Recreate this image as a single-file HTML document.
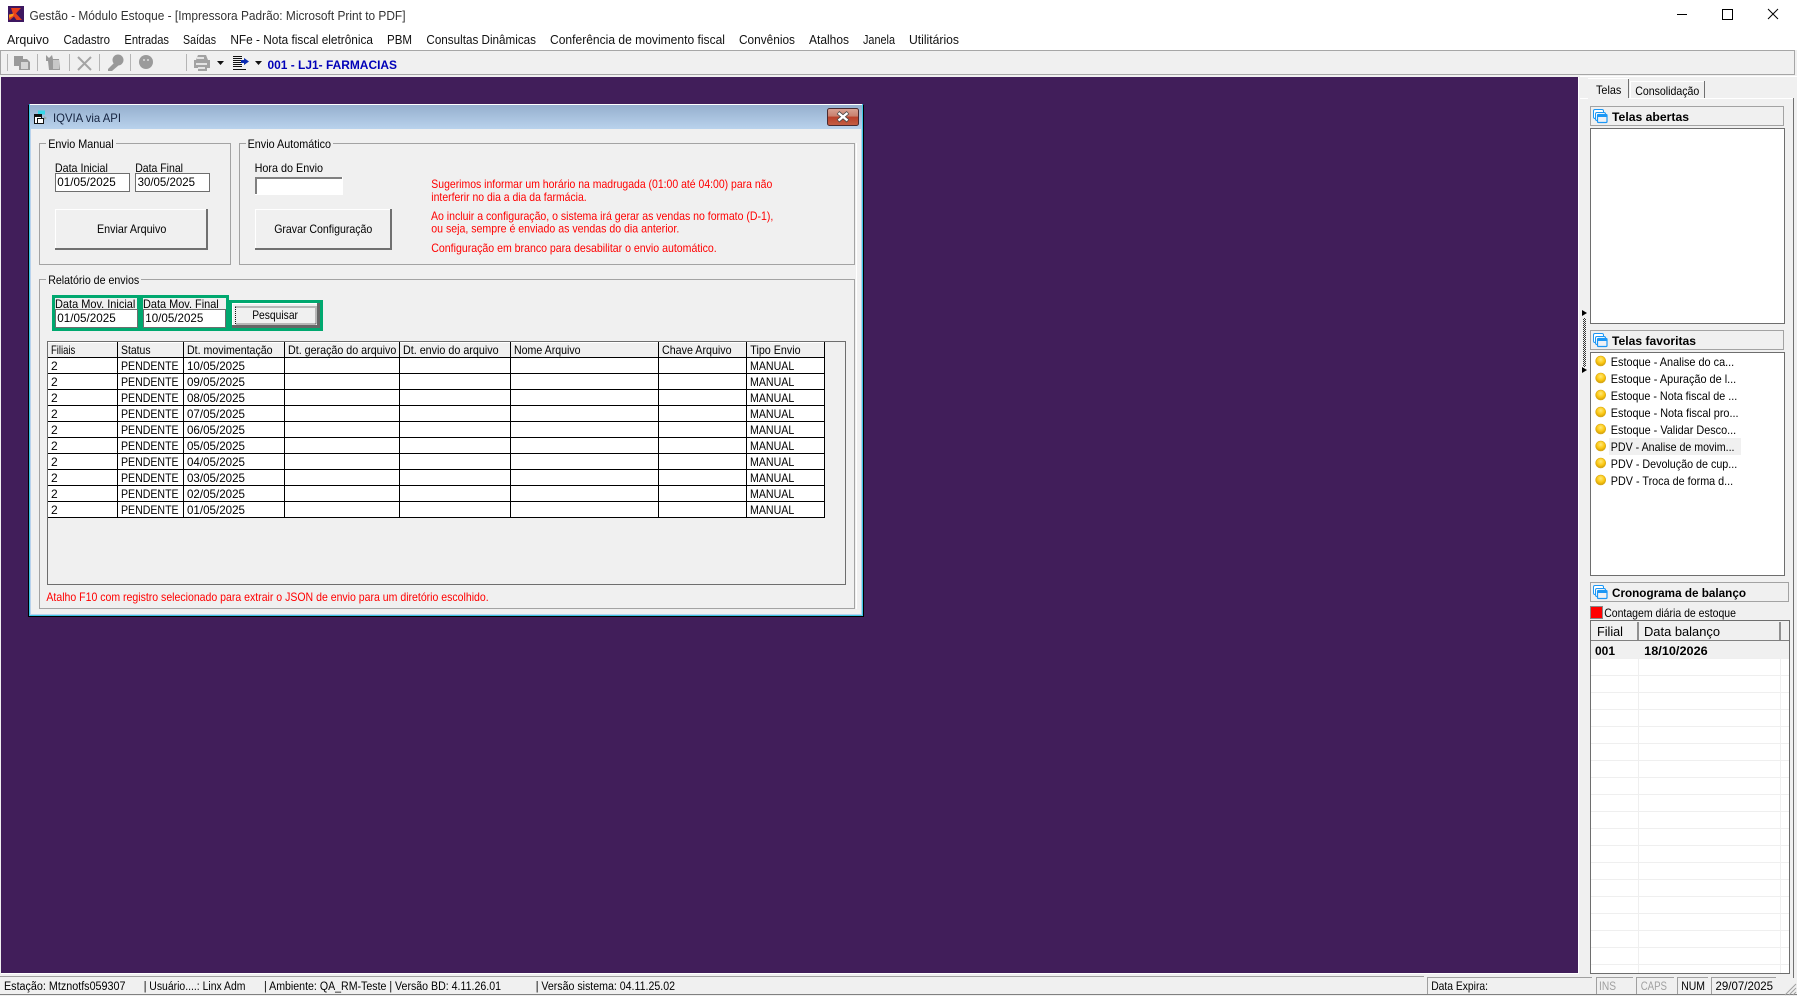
<!DOCTYPE html>
<html lang="pt"><head><meta charset="utf-8"><title>Gestão</title>
<style>
html,body{margin:0;padding:0;background:#f0f0f0;width:1797px;height:996px;overflow:hidden}
svg{display:block}
text{font-family:"Liberation Sans",Arial,sans-serif;font-size:12px;fill:#000}
.m{font-size:12.5px;fill:#111}
.r{fill:#f00}
.b{font-weight:bold}
.s{font-size:11.5px}
.c{shape-rendering:crispEdges}
</style></head><body>
<svg xmlns="http://www.w3.org/2000/svg" width="1797" height="996" viewBox="0 0 1797 996">
<defs>
<linearGradient id="tb" x1="0" y1="0" x2="0" y2="1"><stop offset="0" stop-color="#94aecd"/><stop offset="1" stop-color="#b9d2ec"/></linearGradient>
<linearGradient id="cl" x1="0" y1="0" x2="0" y2="1"><stop offset="0" stop-color="#d9a394"/><stop offset=".45" stop-color="#c8806e"/><stop offset=".5" stop-color="#b9402a"/><stop offset="1" stop-color="#c45f45"/></linearGradient>
<radialGradient id="bu" cx=".5" cy=".35" r=".65"><stop offset="0" stop-color="#ffe97a"/><stop offset=".6" stop-color="#fcc70f"/><stop offset="1" stop-color="#c99a10"/></radialGradient>
<pattern id="chk" width="2" height="2" patternUnits="userSpaceOnUse"><rect width="2" height="2" fill="#f0f0f0"/><rect width="1" height="1" fill="#333"/><rect x="1" y="1" width="1" height="1" fill="#333"/></pattern>
<g id="win"><rect x="0.5" y="0.5" width="10" height="9" rx="1.5" fill="#fff" stroke="#1c97f5"/><rect x="2.5" y="3.5" width="10" height="8" rx="1.5" fill="#fff" stroke="#1c97f5"/><rect x="4.5" y="5.5" width="9.5" height="8" rx="1" fill="#eef1f6" stroke="#1c97f5" stroke-width="1.2"/><rect x="5" y="6" width="9" height="2" fill="#1c97f5"/></g>
</defs>

<!-- window top -->
<rect class="c" x="0" y="0" width="1797" height="50" fill="#fff"/>
<rect x="8" y="6" width="16" height="16" fill="#3d1760"/>
<path d="M11 8L21 8L16 13.5L22 20L16.5 20L14 16.5L10 20L8.5 19L13 14L11 8Z" fill="#e8401c"/>
<path d="M9 14.5L14 13.5L13 16L9 18Z" fill="#f79a1e"/>
<text x="29.5" y="20" class="m" textLength="376" lengthAdjust="spacingAndGlyphs" style="fill:#333">Gestão  - Módulo Estoque - [Impressora Padrão: Microsoft Print to PDF]</text>
<rect class="c" x="1677" y="14" width="10" height="1" fill="#000"/>
<rect class="c" x="1722.5" y="9.5" width="10" height="10" fill="none" stroke="#000"/>
<path d="M1768 9L1778 19M1778 9L1768 19" stroke="#000" stroke-width="1" fill="none"/>

<!-- menu -->
<text class="m" x="7" y="44" textLength="42" lengthAdjust="spacingAndGlyphs">Arquivo</text>
<text class="m" x="63.5" y="44" textLength="46.5" lengthAdjust="spacingAndGlyphs">Cadastro</text>
<text class="m" x="124.4" y="44" textLength="44.6" lengthAdjust="spacingAndGlyphs">Entradas</text>
<text class="m" x="183" y="44" textLength="33" lengthAdjust="spacingAndGlyphs">Saídas</text>
<text class="m" x="230.4" y="44" textLength="142.6" lengthAdjust="spacingAndGlyphs">NFe - Nota fiscal eletrônica</text>
<text class="m" x="387" y="44" textLength="25" lengthAdjust="spacingAndGlyphs">PBM</text>
<text class="m" x="426.4" y="44" textLength="109.6" lengthAdjust="spacingAndGlyphs">Consultas Dinâmicas</text>
<text class="m" x="550" y="44" textLength="175" lengthAdjust="spacingAndGlyphs">Conferência de movimento fiscal</text>
<text class="m" x="739" y="44" textLength="56" lengthAdjust="spacingAndGlyphs">Convênios</text>
<text class="m" x="809" y="44" textLength="40" lengthAdjust="spacingAndGlyphs">Atalhos</text>
<text class="m" x="863" y="44" textLength="32" lengthAdjust="spacingAndGlyphs">Janela</text>
<text class="m" x="909" y="44" textLength="50" lengthAdjust="spacingAndGlyphs">Utilitários</text>

<!-- toolbar -->
<rect class="c" x="0.5" y="50.5" width="1794" height="24" fill="#f0f0f0" stroke="#a6a6a6"/>
<g class="c" fill="#b5b5b5">
<rect x="7" y="54" width="1" height="17"/><rect x="37" y="54" width="1" height="17"/><rect x="69" y="54" width="1" height="17"/><rect x="99" y="54" width="1" height="17"/><rect x="130" y="54" width="1" height="17"/><rect x="186" y="54" width="1" height="17"/>
</g>
<!-- copy -->
<path d="M14 56h9v3h4l3 3v8H19v-4h-5z" fill="#9a9a9a"/><rect x="21" y="62" width="7" height="7" fill="#d6d6d6"/>
<!-- paste -->
<path d="M46 55l3 3 3-3 1 4h6l1 11H49l-1-9h-2z" fill="#9a9a9a"/><rect x="53" y="60" width="6" height="9" fill="#c8c8c8"/>
<!-- X -->
<path d="M78 57L91 70M91 57L78 70" stroke="#a5a5a5" stroke-width="2" fill="none"/>
<!-- key -->
<circle cx="118" cy="60" r="5.5" fill="#999"/><path d="M115 62L108 69v2h4l7-6z" fill="#999"/>
<!-- smile -->
<circle cx="146" cy="62" r="7" fill="#9b9b9b"/><circle cx="144" cy="60" r="1" fill="#ddd"/><circle cx="148" cy="60" r="1" fill="#ddd"/>
<!-- printer -->
<path d="M198 55h8l2 5h2v8h-3v3h-9v-3h-4v-8h2z" fill="#a2a2a2"/><rect x="197" y="57" width="7" height="2" fill="#e4e4e4"/><rect x="196" y="63" width="11" height="2" fill="#e4e4e4"/><rect x="198" y="67" width="7" height="2" fill="#e4e4e4"/>
<path d="M217 61h7l-3.500 4z" fill="#111"/>
<!-- list -->
<g class="c" fill="#111"><rect x="233" y="56" width="9" height="1"/><rect x="233" y="58" width="9" height="1"/><rect x="233" y="60" width="9" height="1"/><rect x="233" y="62" width="9" height="1"/><rect x="233" y="64" width="9" height="1"/><rect x="233" y="66" width="9" height="1"/><rect x="233" y="69" width="13" height="1"/></g>
<path d="M241 60h3v-2l5 3.500-5 3.500v-2h-3z" fill="#0a2bb0"/>
<path d="M255 61h7l-3.500 4z" fill="#111"/>
<text x="267.500" y="69" class="b" textLength="129.500" lengthAdjust="spacingAndGlyphs" style="fill:#0000b8">001 - LJ1- FARMACIAS</text>

<!-- workspace -->
<rect class="c" x="1" y="77" width="1577" height="896" fill="#411e5a"/>
<rect class="c" x="1578" y="77" width="1" height="897" fill="#fff"/>
<rect class="c" x="1" y="973" width="1578" height="1" fill="#fff"/>

<!-- dialog -->
<rect class="c" x="28" y="105" width="836" height="512" fill="#000"/>
<rect class="c" x="29" y="104" width="834" height="512" fill="#3fc6e6"/>
<rect x="30" y="104" width="832" height="25" fill="url(#tb)"/>
<rect class="c" x="30" y="104" width="832" height="1" fill="#fff"/>
<rect class="c" x="30" y="129" width="832" height="486" fill="#b9d2ec"/>
<rect class="c" x="31" y="129" width="830" height="485" fill="#f0f0f0"/>
<rect class="c" x="29" y="105" width="1" height="511" fill="#3fc6e6"/>
<rect x="827.500" y="108.500" width="31" height="17" rx="2" fill="url(#cl)" stroke="#4a2b30"/>
<path d="M838 112.500L848 121M848 112.500L838 121" stroke="#4a4a4a" stroke-width="4" fill="none"/>
<path d="M838.500 113L847.500 120.500M847.500 113L838.500 120.500" stroke="#fff" stroke-width="2.400" fill="none"/>
<!-- dlg icon -->
<rect x="38" y="110.500" width="7" height="4" fill="#38d6e8"/>
<rect x="34.500" y="114.500" width="7" height="9" fill="#fff" stroke="#111"/><rect x="35" y="115" width="6" height="2" fill="#111"/><rect x="37.500" y="118.500" width="6" height="5" fill="#fff" stroke="#111"/>
<path d="M44 116l3 2-3 2z" fill="#9aa"/>
<text x="53" y="122" textLength="68" lengthAdjust="spacingAndGlyphs" style="fill:#15233f">IQVIA via API</text>

<!-- groups -->
<g class="c" fill="none">
<rect x="39.500" y="143.500" width="191" height="121" stroke="#a3a3a3"/>
<rect x="239.500" y="143.500" width="615" height="121" stroke="#a3a3a3"/>
<rect x="39.500" y="279.500" width="815" height="329" stroke="#a3a3a3"/>
<rect x="856" y="143" width="1" height="466" fill="#fff" stroke="none"/>
</g>
<g class="c" fill="#f0f0f0"><rect x="46" y="140" width="70" height="8"/><rect x="246" y="140" width="87" height="8"/><rect x="46" y="276" width="95" height="8"/></g>
<text x="48.200" y="148" textLength="65.500" lengthAdjust="spacingAndGlyphs">Envio Manual</text>
<text x="247.600" y="148" textLength="83.400" lengthAdjust="spacingAndGlyphs">Envio Automático</text>
<text x="48.200" y="284" textLength="91" lengthAdjust="spacingAndGlyphs">Relatório de envios</text>

<text x="54.900" y="172" textLength="53" lengthAdjust="spacingAndGlyphs">Data Inicial</text>
<text x="135.200" y="172" textLength="47.800" lengthAdjust="spacingAndGlyphs">Data Final</text>
<text x="254.600" y="172" textLength="68.400" lengthAdjust="spacingAndGlyphs">Hora do Envio</text>

<g class="c">
<rect x="55.500" y="173.500" width="74" height="18" fill="#fff" stroke="#6e6e6e"/>
<rect x="135.500" y="173.500" width="74" height="18" fill="#fff" stroke="#6e6e6e"/>
<rect x="255" y="177" width="88" height="18" fill="#fff"/>
<rect x="255" y="177" width="87" height="2" fill="#808080"/><rect x="255" y="177" width="2" height="17" fill="#808080"/>
<rect x="257" y="179" width="85" height="15" fill="#fff"/>
</g>
<text x="57.300" y="186" textLength="58.400" lengthAdjust="spacingAndGlyphs">01/05/2025</text>
<text x="137.600" y="186" textLength="57.400" lengthAdjust="spacingAndGlyphs">30/05/2025</text>

<g class="c">
<rect x="55" y="209" width="153" height="41" fill="#707070"/><rect x="55" y="209" width="151" height="39" fill="#fff"/><rect x="56" y="210" width="150" height="38" fill="#f0f0f0"/>
<rect x="255" y="209" width="137" height="41" fill="#707070"/><rect x="255" y="209" width="135" height="39" fill="#fff"/><rect x="256" y="210" width="134" height="38" fill="#f0f0f0"/>
</g>
<text x="97" y="233" textLength="69.300" lengthAdjust="spacingAndGlyphs">Enviar Arquivo</text>
<text x="274.200" y="233" textLength="98.100" lengthAdjust="spacingAndGlyphs">Gravar Configuração</text>

<text class="r" x="431.300" y="188" textLength="341" lengthAdjust="spacingAndGlyphs">Sugerimos informar um horário na madrugada (01:00 até 04:00) para não</text>
<text class="r" x="431.300" y="201" textLength="155.400" lengthAdjust="spacingAndGlyphs">interferir no dia a dia da farmácia.</text>
<text class="r" x="431" y="220" textLength="342.300" lengthAdjust="spacingAndGlyphs">Ao incluir a configuração, o sistema irá gerar as vendas no formato (D-1),</text>
<text class="r" x="431.300" y="232.500" textLength="248" lengthAdjust="spacingAndGlyphs">ou seja, sempre é enviado as vendas do dia anterior.</text>
<text class="r" x="431.300" y="252" textLength="285.400" lengthAdjust="spacingAndGlyphs">Configuração em branco para desabilitar o envio automático.</text>

<!-- green filter -->
<g class="c">
<rect x="52" y="295" width="177" height="36" fill="#00a86f"/>
<rect x="229" y="300" width="94" height="31" fill="#00a86f"/>
<rect x="55" y="298" width="82" height="11" fill="#f0f0f0"/>
<rect x="143" y="298" width="83" height="11" fill="#f0f0f0"/>
<rect x="55.500" y="309.500" width="82" height="18" fill="#fff" stroke="#6e6e6e"/>
<rect x="143.500" y="309.500" width="82" height="18" fill="#fff" stroke="#6e6e6e"/>
<rect x="232" y="303" width="88" height="25" fill="#666"/>
<rect x="232" y="303" width="85" height="22" fill="#fff"/>
<rect x="233" y="304" width="84" height="21" fill="#f0f0f0"/>
<rect x="235.500" y="307" width="80.500" height="17" fill="none" stroke="#111" stroke-dasharray="1 1"/>
</g>
<text x="55" y="308" textLength="80.300" lengthAdjust="spacingAndGlyphs">Data Mov. Inicial</text>
<text x="143" y="308" textLength="75.700" lengthAdjust="spacingAndGlyphs">Data Mov. Final</text>
<text x="57.300" y="322" textLength="58.400" lengthAdjust="spacingAndGlyphs">01/05/2025</text>
<text x="145.300" y="322" textLength="58" lengthAdjust="spacingAndGlyphs">10/05/2025</text>
<text x="252.200" y="319" textLength="45.800" lengthAdjust="spacingAndGlyphs">Pesquisar</text>

<!-- grid -->
<g class="c">
<rect x="47.500" y="341.500" width="798" height="243" fill="#f0f0f0" stroke="#6e6e6e"/>
<rect x="48" y="358" width="776" height="160" fill="#fff"/>
<rect x="48" y="342" width="776" height="1" fill="#fff"/>
<g fill="#000">
<rect x="48" y="357" width="777" height="1"/><rect x="48" y="373" width="777" height="1"/><rect x="48" y="389" width="777" height="1"/><rect x="48" y="405" width="777" height="1"/><rect x="48" y="421" width="777" height="1"/><rect x="48" y="437" width="777" height="1"/><rect x="48" y="453" width="777" height="1"/><rect x="48" y="469" width="777" height="1"/><rect x="48" y="485" width="777" height="1"/><rect x="48" y="501" width="777" height="1"/><rect x="48" y="517" width="777" height="1"/>
<rect x="117" y="342" width="1" height="176"/><rect x="183" y="342" width="1" height="176"/><rect x="284" y="342" width="1" height="176"/><rect x="399" y="342" width="1" height="176"/><rect x="510" y="342" width="1" height="176"/><rect x="658" y="342" width="1" height="176"/><rect x="746" y="342" width="1" height="176"/><rect x="824" y="342" width="1" height="176"/>
</g>
</g>
<g transform="translate(-0.7 0)">
<text x="51.700" y="354" textLength="24.300" lengthAdjust="spacingAndGlyphs">Filiais</text>
<text x="121.700" y="354" textLength="29.600" lengthAdjust="spacingAndGlyphs">Status</text>
<text x="187.700" y="354" textLength="85.600" lengthAdjust="spacingAndGlyphs">Dt. movimentação</text>
<text x="288.700" y="354" textLength="108.300" lengthAdjust="spacingAndGlyphs">Dt. geração do arquivo</text>
<text x="403.700" y="354" textLength="95.600" lengthAdjust="spacingAndGlyphs">Dt. envio do arquivo</text>
<text x="514.700" y="354" textLength="66.600" lengthAdjust="spacingAndGlyphs">Nome Arquivo</text>
<text x="662.700" y="354" textLength="69.600" lengthAdjust="spacingAndGlyphs">Chave Arquivo</text>
<text x="751" y="354" textLength="50.300" lengthAdjust="spacingAndGlyphs">Tipo Envio</text>

<text x="51.700" y="370">2</text><text x="121.700" y="370" textLength="57.600" lengthAdjust="spacingAndGlyphs">PENDENTE</text><text x="187.700" y="370" textLength="58" lengthAdjust="spacingAndGlyphs">10/05/2025</text><text x="750.700" y="370" textLength="44.300" lengthAdjust="spacingAndGlyphs">MANUAL</text>
<text x="51.700" y="386">2</text><text x="121.700" y="386" textLength="57.600" lengthAdjust="spacingAndGlyphs">PENDENTE</text><text x="187.700" y="386" textLength="58" lengthAdjust="spacingAndGlyphs">09/05/2025</text><text x="750.700" y="386" textLength="44.300" lengthAdjust="spacingAndGlyphs">MANUAL</text>
<text x="51.700" y="402">2</text><text x="121.700" y="402" textLength="57.600" lengthAdjust="spacingAndGlyphs">PENDENTE</text><text x="187.700" y="402" textLength="58" lengthAdjust="spacingAndGlyphs">08/05/2025</text><text x="750.700" y="402" textLength="44.300" lengthAdjust="spacingAndGlyphs">MANUAL</text>
<text x="51.700" y="418">2</text><text x="121.700" y="418" textLength="57.600" lengthAdjust="spacingAndGlyphs">PENDENTE</text><text x="187.700" y="418" textLength="58" lengthAdjust="spacingAndGlyphs">07/05/2025</text><text x="750.700" y="418" textLength="44.300" lengthAdjust="spacingAndGlyphs">MANUAL</text>
<text x="51.700" y="434">2</text><text x="121.700" y="434" textLength="57.600" lengthAdjust="spacingAndGlyphs">PENDENTE</text><text x="187.700" y="434" textLength="58" lengthAdjust="spacingAndGlyphs">06/05/2025</text><text x="750.700" y="434" textLength="44.300" lengthAdjust="spacingAndGlyphs">MANUAL</text>
<text x="51.700" y="450">2</text><text x="121.700" y="450" textLength="57.600" lengthAdjust="spacingAndGlyphs">PENDENTE</text><text x="187.700" y="450" textLength="58" lengthAdjust="spacingAndGlyphs">05/05/2025</text><text x="750.700" y="450" textLength="44.300" lengthAdjust="spacingAndGlyphs">MANUAL</text>
<text x="51.700" y="466">2</text><text x="121.700" y="466" textLength="57.600" lengthAdjust="spacingAndGlyphs">PENDENTE</text><text x="187.700" y="466" textLength="58" lengthAdjust="spacingAndGlyphs">04/05/2025</text><text x="750.700" y="466" textLength="44.300" lengthAdjust="spacingAndGlyphs">MANUAL</text>
<text x="51.700" y="482">2</text><text x="121.700" y="482" textLength="57.600" lengthAdjust="spacingAndGlyphs">PENDENTE</text><text x="187.700" y="482" textLength="58" lengthAdjust="spacingAndGlyphs">03/05/2025</text><text x="750.700" y="482" textLength="44.300" lengthAdjust="spacingAndGlyphs">MANUAL</text>
<text x="51.700" y="498">2</text><text x="121.700" y="498" textLength="57.600" lengthAdjust="spacingAndGlyphs">PENDENTE</text><text x="187.700" y="498" textLength="58" lengthAdjust="spacingAndGlyphs">02/05/2025</text><text x="750.700" y="498" textLength="44.300" lengthAdjust="spacingAndGlyphs">MANUAL</text>
<text x="51.700" y="514">2</text><text x="121.700" y="514" textLength="57.600" lengthAdjust="spacingAndGlyphs">PENDENTE</text><text x="187.700" y="514" textLength="58" lengthAdjust="spacingAndGlyphs">01/05/2025</text><text x="750.700" y="514" textLength="44.300" lengthAdjust="spacingAndGlyphs">MANUAL</text>
</g>

<text class="r" x="46.400" y="601" textLength="442.300" lengthAdjust="spacingAndGlyphs">Atalho F10 com registro selecionado para extrair o JSON de envio para um diretório escolhido.</text>

<!-- right panel -->
<rect class="c" x="1580" y="76" width="217" height="1" fill="#fff"/>
<rect class="c" x="1793" y="98" width="1" height="880" fill="#707070"/>
<rect class="c" x="1580" y="98" width="213" height="1" fill="#fff"/>
<g class="c">
<rect x="1588" y="78" width="41" height="21" fill="#f0f0f0"/><rect x="1588" y="78" width="41" height="1" fill="#fff"/><rect x="1628" y="79" width="1" height="19" fill="#707070"/>
<rect x="1630" y="81" width="1" height="17" fill="#fff"/><rect x="1630" y="81" width="74" height="1" fill="#fff"/><rect x="1704" y="81" width="1" height="17" fill="#707070"/>
</g>
<text x="1596" y="94" textLength="25.300" lengthAdjust="spacingAndGlyphs">Telas</text>
<text x="1635.200" y="95" textLength="64.100" lengthAdjust="spacingAndGlyphs">Consolidação</text>

<g class="c">
<rect x="1590.500" y="106.500" width="193" height="19" fill="#f0f0f0" stroke="#a3a3a3"/>
<rect x="1590.500" y="128.500" width="194" height="195" fill="#fff" stroke="#6e6e6e"/>
<rect x="1590.500" y="330.500" width="193" height="19" fill="#f0f0f0" stroke="#a3a3a3"/>
<rect x="1590.500" y="352.500" width="194" height="223" fill="#fff" stroke="#6e6e6e"/>
<rect x="1590.500" y="582.500" width="198" height="19" fill="#f0f0f0" stroke="#a3a3a3"/>
</g>
<use href="#win" x="1593" y="109"/><use href="#win" x="1593" y="333"/><use href="#win" x="1593" y="585"/>
<text class="b" x="1612" y="121" textLength="77" lengthAdjust="spacingAndGlyphs">Telas abertas</text>
<text class="b" x="1612" y="345" textLength="84" lengthAdjust="spacingAndGlyphs">Telas favoritas</text>
<text class="b" x="1612" y="597" textLength="134" lengthAdjust="spacingAndGlyphs">Cronograma de balanço</text>

<rect class="c" x="1609" y="438" width="132" height="17" fill="#f0f0f0"/>
<g fill="url(#bu)" stroke="#d9a70f" stroke-width=".6">
<circle cx="1600.700" cy="361" r="5"/><circle cx="1600.700" cy="378" r="5"/><circle cx="1600.700" cy="395" r="5"/><circle cx="1600.700" cy="412" r="5"/><circle cx="1600.700" cy="429" r="5"/><circle cx="1600.700" cy="446" r="5"/><circle cx="1600.700" cy="463" r="5"/><circle cx="1600.700" cy="480" r="5"/>
</g>
<g transform="translate(-0.5 0)">
<text x="1611.300" y="366" textLength="123.400" lengthAdjust="spacingAndGlyphs">Estoque - Analise do ca...</text>
<text x="1611.300" y="383" textLength="125.400" lengthAdjust="spacingAndGlyphs">Estoque - Apuração de l...</text>
<text x="1611.300" y="400" textLength="126.400" lengthAdjust="spacingAndGlyphs">Estoque - Nota fiscal de ...</text>
<text x="1611.300" y="417" textLength="127.700" lengthAdjust="spacingAndGlyphs">Estoque - Nota fiscal pro...</text>
<text x="1611.300" y="434" textLength="125.400" lengthAdjust="spacingAndGlyphs">Estoque - Validar Desco...</text>
<text x="1611.300" y="451" textLength="123.700" lengthAdjust="spacingAndGlyphs">PDV - Analise de movim...</text>
<text x="1611.300" y="468" textLength="126.400" lengthAdjust="spacingAndGlyphs">PDV - Devolução de cup...</text>
<text x="1611.300" y="485" textLength="122.400" lengthAdjust="spacingAndGlyphs">PDV - Troca de forma d...</text>
</g>

<rect class="c" x="1590.500" y="606.500" width="12" height="12" fill="#f00" stroke="#888"/>
<text x="1604.200" y="617" textLength="131.800" lengthAdjust="spacingAndGlyphs">Contagem diária de estoque</text>

<g class="c">
<rect x="1590.500" y="620.500" width="199" height="353" fill="#fff" stroke="#6e6e6e"/>
<rect x="1591" y="621" width="198" height="20" fill="#f0f0f0"/>
<rect x="1591" y="641" width="198" height="17" fill="#f0f0f0"/>
<rect x="1591" y="640" width="198" height="1" fill="#808080"/>
<rect x="1637" y="622" width="2" height="18" fill="#909090"/>
<rect x="1779" y="622" width="2" height="18" fill="#909090"/>
<g fill="#efefef">
<rect x="1591" y="658" width="198" height="1"/><rect x="1591" y="675" width="198" height="1"/><rect x="1591" y="692" width="198" height="1"/><rect x="1591" y="709" width="198" height="1"/><rect x="1591" y="726" width="198" height="1"/><rect x="1591" y="743" width="198" height="1"/><rect x="1591" y="760" width="198" height="1"/><rect x="1591" y="777" width="198" height="1"/><rect x="1591" y="794" width="198" height="1"/><rect x="1591" y="811" width="198" height="1"/><rect x="1591" y="828" width="198" height="1"/><rect x="1591" y="845" width="198" height="1"/><rect x="1591" y="862" width="198" height="1"/><rect x="1591" y="879" width="198" height="1"/><rect x="1591" y="896" width="198" height="1"/><rect x="1591" y="913" width="198" height="1"/><rect x="1591" y="930" width="198" height="1"/><rect x="1591" y="947" width="198" height="1"/><rect x="1591" y="964" width="198" height="1"/>
<rect x="1638" y="658" width="1" height="315"/><rect x="1780" y="658" width="1" height="315"/>
</g>
</g>
<text x="1597" y="636" style="font-size:13px" textLength="26" lengthAdjust="spacingAndGlyphs">Filial</text>
<text x="1644" y="636" style="font-size:13px" textLength="76" lengthAdjust="spacingAndGlyphs">Data balanço</text>
<text class="b" x="1595" y="655" textLength="20" lengthAdjust="spacingAndGlyphs">001</text>
<text class="b" x="1644.200" y="655" textLength="63.500" lengthAdjust="spacingAndGlyphs">18/10/2026</text>

<!-- splitter -->
<path d="M1582 310l5 3-5 3zM1582 367l5 3-5 3z" fill="#000"/>
<rect class="c" x="1583" y="318" width="3" height="49" fill="url(#chk)"/>

<!-- status bar -->
<g class="c">
<rect x="0" y="976" width="1424" height="1" fill="#a0a0a0"/>
<rect x="0" y="994" width="1797" height="1" fill="#808080"/>
<rect x="1427" y="977" width="165" height="1" fill="#a0a0a0"/><rect x="1427" y="977" width="1" height="17" fill="#a0a0a0"/>
<rect x="1596" y="977" width="37" height="1" fill="#a0a0a0"/><rect x="1596" y="977" width="1" height="17" fill="#a0a0a0"/>
<rect x="1636" y="977" width="38" height="1" fill="#a0a0a0"/><rect x="1636" y="977" width="1" height="17" fill="#a0a0a0"/>
<rect x="1677" y="977" width="31" height="1" fill="#a0a0a0"/><rect x="1677" y="977" width="1" height="17" fill="#a0a0a0"/>
<rect x="1711" y="977" width="65" height="1" fill="#a0a0a0"/><rect x="1711" y="977" width="1" height="17" fill="#a0a0a0"/>
</g>
<text class="s" x="4" y="990" textLength="121.500" lengthAdjust="spacingAndGlyphs">Estação: Mtznotfs059307</text>
<text class="s" x="143.700" y="990" textLength="101.800" lengthAdjust="spacingAndGlyphs">| Usuário....: Linx Adm</text>
<text class="s" x="264" y="990" textLength="237" lengthAdjust="spacingAndGlyphs">| Ambiente: QA_RM-Teste | Versão BD: 4.11.26.01</text>
<text class="s" x="535.700" y="990" textLength="139.300" lengthAdjust="spacingAndGlyphs">| Versão sistema: 04.11.25.02</text>
<text x="1431.200" y="990" textLength="56.800" lengthAdjust="spacingAndGlyphs">Data Expira:</text>
<text x="1599" y="990" textLength="17" lengthAdjust="spacingAndGlyphs" style="fill:#a0a0a0">INS</text>
<text x="1640.700" y="990" textLength="26.300" lengthAdjust="spacingAndGlyphs" style="fill:#a0a0a0">CAPS</text>
<text x="1681.200" y="990" textLength="23.800" lengthAdjust="spacingAndGlyphs">NUM</text>
<text x="1715.500" y="990" textLength="57.500" lengthAdjust="spacingAndGlyphs">29/07/2025</text>
<path d="M1785 995L1796 984M1789 995L1796 988M1793 995L1796 992" stroke="#a0a0a0" stroke-width="1" fill="none"/>
</svg>
</body></html>
